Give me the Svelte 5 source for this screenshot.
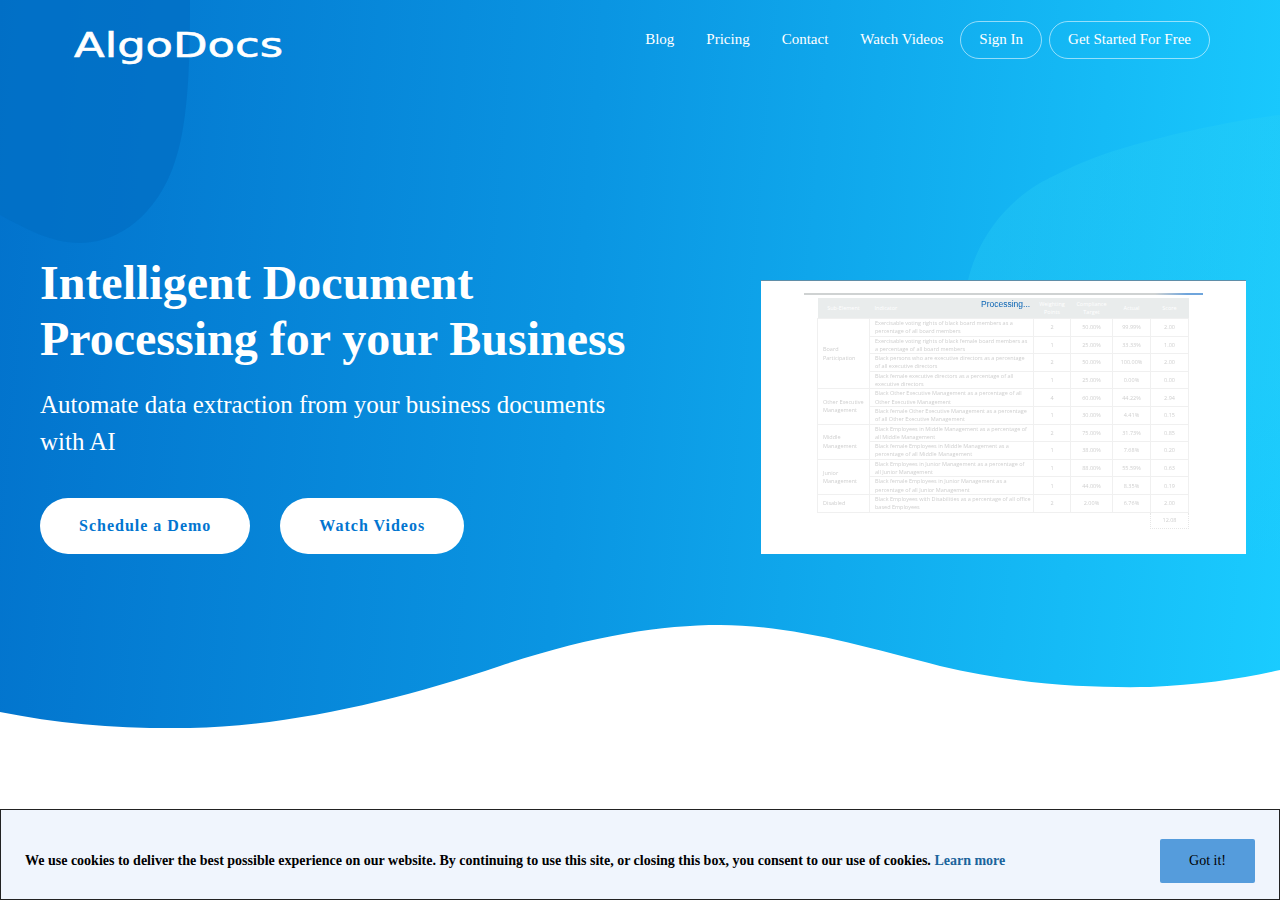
<script lang="ts">
	const links = ['Blog', 'Pricing', 'Contact', 'Watch Videos']

	type Row = { text: string; points: string; target: string; actual: string; score: string }
	type Group = { name: string; rows: Row[] }

	const groups: Group[] = [
		{
			name: 'Board Participation',
			rows: [
				{ text: 'Exercisable voting rights of black board members as a percentage of all board members', points: '2', target: '50.00%', actual: '99.99%', score: '2.00' },
				{ text: 'Exercisable voting rights of black female board members as a percentage of all board members', points: '1', target: '25.00%', actual: '33.33%', score: '1.00' },
				{ text: 'Black persons who are executive directors as a percentage of all executive directors', points: '2', target: '50.00%', actual: '100.00%', score: '2.00' },
				{ text: 'Black female executive directors as a percentage of all executive directors', points: '1', target: '25.00%', actual: '0.00%', score: '0.00' }
			]
		},
		{
			name: 'Other Executive Management',
			rows: [
				{ text: 'Black Other Executive Management as a percentage of all Other Executive Management', points: '4', target: '60.00%', actual: '44.22%', score: '2.94' },
				{ text: 'Black female Other Executive Management as a percentage of all Other Executive Management', points: '1', target: '30.00%', actual: '4.41%', score: '0.15' }
			]
		},
		{
			name: 'Middle Management',
			rows: [
				{ text: 'Black Employees in Middle Management as a percentage of all Middle Management', points: '2', target: '75.00%', actual: '31.73%', score: '0.85' },
				{ text: 'Black female Employees in Middle Management as a percentage of all Middle Management', points: '1', target: '38.00%', actual: '7.68%', score: '0.20' }
			]
		},
		{
			name: 'Junior Management',
			rows: [
				{ text: 'Black Employees in Junior Management as a percentage of all Junior Management', points: '1', target: '88.00%', actual: '55.59%', score: '0.63' },
				{ text: 'Black female Employees in Junior Management as a percentage of all Junior Management', points: '1', target: '44.00%', actual: '8.35%', score: '0.19' }
			]
		},
		{
			name: 'Disabled',
			rows: [
				{ text: 'Black Employees with Disabilities as a percentage of all office based Employees', points: '2', target: '2.00%', actual: '6.76%', score: '2.00' }
			]
		}
	]
</script>

<div class="page">
	<section class="hero">
		<svg class="shapes" viewBox="0 0 1280 730" preserveAspectRatio="none" aria-hidden="true">
			<defs>
				<linearGradient id="fade" x1="0" y1="0" x2="0" y2="1">
					<stop offset="0" stop-color="#2ad0f5" stop-opacity="0.32" />
					<stop offset="0.6" stop-color="#2ad0f5" stop-opacity="0.28" />
					<stop offset="1" stop-color="#2ad0f5" stop-opacity="0" />
				</linearGradient>
			</defs>
			<path class="dark" d="M0 0H190C190 70 188 130 172 170C150 225 110 243 80 243C50 243 25 228 0 215Z" />
			<path fill="url(#fade)" d="M967 285C975 245 1000 207 1040 183C1075 165 1097 153 1180 133C1215 125 1250 118 1280 115V560H967Z" />
			<path class="wave" d="M0 712C60 724 120 729 190 728C290 726 400 700 500 666C590 636 660 625 720 625C790 625 860 645 940 666C1020 685 1090 688 1150 687C1200 685 1245 678 1280 670V730H0Z" />
		</svg>

		<header>
			<a class="logo" href="#home" aria-label="AlgoDocs">
				<svg viewBox="0 0 209 44" width="209" height="44">
					<text x="0" y="36" textLength="209" lengthAdjust="spacingAndGlyphs">AlgoDocs</text>
				</svg>
			</a>
			<nav>
				{#each links as link}
					<a class="link" href="#home">{link}</a>
				{/each}
				<a class="pill sign" href="#home">Sign In</a>
				<a class="pill" href="#home">Get Started For Free</a>
			</nav>
		</header>

		<div class="main">
			<div class="copy">
				<h1>Intelligent Document<br />Processing for your Business</h1>
				<p>Automate data extraction from your business documents with AI</p>
				<div class="actions">
					<a class="cta" href="#home">Schedule a Demo</a>
					<a class="cta" href="#home">Watch Videos</a>
				</div>
			</div>

			<div class="shot">
				<div class="bar"></div>
				<table>
					<thead>
						<tr>
							<th class="c1">Sub-Element</th>
							<th class="c2">Indicator</th>
							<th class="c3">Weighting Points</th>
							<th class="c4">Compliance Target</th>
							<th class="c5">Actual</th>
							<th class="c6">Score</th>
						</tr>
					</thead>
					<tbody>
						{#each groups as group}
							{#each group.rows as row, i}
								<tr>
									{#if i === 0}
										<td class="name" rowspan={group.rows.length}>{group.name}</td>
									{/if}
									<td class="text">{row.text}</td>
									<td>{row.points}</td>
									<td>{row.target}</td>
									<td>{row.actual}</td>
									<td>{row.score}</td>
								</tr>
							{/each}
						{/each}
						<tr class="total">
							<td colspan="5"></td>
							<td>12.08</td>
						</tr>
					</tbody>
				</table>
				<span class="processing">Processing...</span>
			</div>
		</div>
	</section>

	<div class="cookie">
		<p>
			We use cookies to deliver the best possible experience on our website. By continuing to use this site, or closing this box, you consent to our use of cookies.
			<a href="#home">Learn more</a>
		</p>
		<button type="button">Got it!</button>
	</div>
</div>

<style>
	:global(body) {
		margin: 0;
		background: #fff;
		font-family: 'Liberation Serif', 'Times New Roman', serif;
	}

	a {
		text-decoration: none;
	}

	.page {
		height: 900px;
		overflow: hidden;
	}

	.hero {
		position: relative;
		height: 730px;
		background: linear-gradient(95deg, #0272cc 0%, #0a95e2 45%, #1accff 100%);
		color: #fff;
	}

	.shapes {
		position: absolute;
		inset: 0;
		width: 100%;
		height: 100%;
	}

	.dark {
		fill: #016fc4;
		opacity: 0.75;
	}

	.wave {
		fill: #fff;
	}

	header {
		position: relative;
		display: flex;
		justify-content: space-between;
		align-items: flex-start;
		padding: 21px 70px 0 74px;
	}

	.logo {
		display: block;
		height: 42px;
	}

	.logo svg {
		display: block;
		overflow: visible;
	}

	.logo text {
		font-family: 'DejaVu Sans', sans-serif;
		font-size: 33px;
		fill: #fff;
		stroke: #fff;
		stroke-width: 0.6px;
	}

	nav {
		display: flex;
		align-items: center;
		gap: 7px;
	}

	.link {
		color: #fff;
		font-size: 15px;
		line-height: 35px;
		padding: 0 16px 1px;
		margin-right: -7px;
	}

	.link:nth-child(4) {
		margin-right: -6px;
	}

	.pill {
		color: #fff;
		font-size: 15px;
		line-height: 35px;
		padding: 0 18px 1px;
		border: 1px solid rgba(255, 255, 255, 0.55);
		border-radius: 19px;
	}

	.main {
		position: relative;
		display: grid;
		grid-template-columns: 721px 485px;
		padding: 0 0 0 40px;
		margin-top: 192px;
	}

	h1 {
		margin: 0;
		font-size: 48px;
		line-height: 56px;
		font-weight: 700;
		white-space: nowrap;
	}

	.copy p {
		margin: 19px 0 0;
		width: 590px;
		font-size: 25px;
		line-height: 37px;
	}

	.actions {
		display: flex;
		gap: 30px;
		margin-top: 38px;
	}

	.cta {
		display: block;
		padding: 0 39px;
		background: #fff;
		border-radius: 28px;
		color: #0275d0;
		font-size: 16px;
		font-weight: 700;
		letter-spacing: 1px;
		line-height: 56px;
	}

	.shot {
		position: relative;
		height: 274px;
		margin-top: 25px;
		box-sizing: border-box;
		background: #fff;
		border-top: 1px solid #5f8ea8;
		padding: 17px 0 0 56px;
		font-family: 'Open Sans', sans-serif;
	}

	.bar {
		position: absolute;
		top: 12px;
		left: 43px;
		width: 399px;
		height: 2px;
		background: linear-gradient(90deg, #cfd2d2 0%, #cfd2d2 88%, #6fa5dc 96%, #6fa5dc 100%);
	}

	.processing {
		position: absolute;
		top: 17px;
		left: 220px;
		font-family: 'Liberation Sans', sans-serif;
		font-size: 8.5px;
		line-height: 12px;
		color: #0a64b4;
	}

	table {
		width: 372px;
		border-collapse: collapse;
		table-layout: fixed;
		font-size: 5.5px;
		line-height: 8.2px;
		color: #cfcfcf;
		text-align: center;
		filter: blur(0.3px);
	}

	th {
		height: 20px;
		padding: 0;
		background: #e9ecec;
		color: #fff;
		font-weight: 400;
	}

	td {
		height: 16.6px;
		padding: 0;
		border: 1px solid #f0f0f0;
		overflow: hidden;
	}

	.c1 {
		width: 52px;
	}

	.c2 {
		width: 164px;
		text-align: left;
		padding-left: 5px;
		box-sizing: border-box;
	}

	.c3 {
		width: 37px;
	}

	.c4 {
		width: 42px;
	}

	.c5 {
		width: 38px;
	}

	.name,
	.text {
		text-align: left;
		padding-left: 5px;
	}

	.text {
		padding-right: 2px;
	}

	.total td {
		border: none;
		height: 15px;
	}

	.total td:last-child {
		border: 1px dotted #e6e6e6;
	}

	.cookie {
		position: fixed;
		left: 0;
		right: 0;
		bottom: 0;
		height: 91px;
		box-sizing: border-box;
		display: flex;
		align-items: center;
		justify-content: space-between;
		padding: 12px 24px 0;
		background: #f0f5fd;
		border: 1px solid #222;
		color: #000;
	}

	.cookie p {
		margin: 0;
		font-size: 14px;
		font-weight: 700;
	}

	.cookie a {
		color: #1a649c;
	}

	button {
		width: 95px;
		height: 44px;
		background: #559cdc;
		border: none;
		border-radius: 2px;
		color: #000;
		font: inherit;
		font-size: 14px;
	}
</style>
